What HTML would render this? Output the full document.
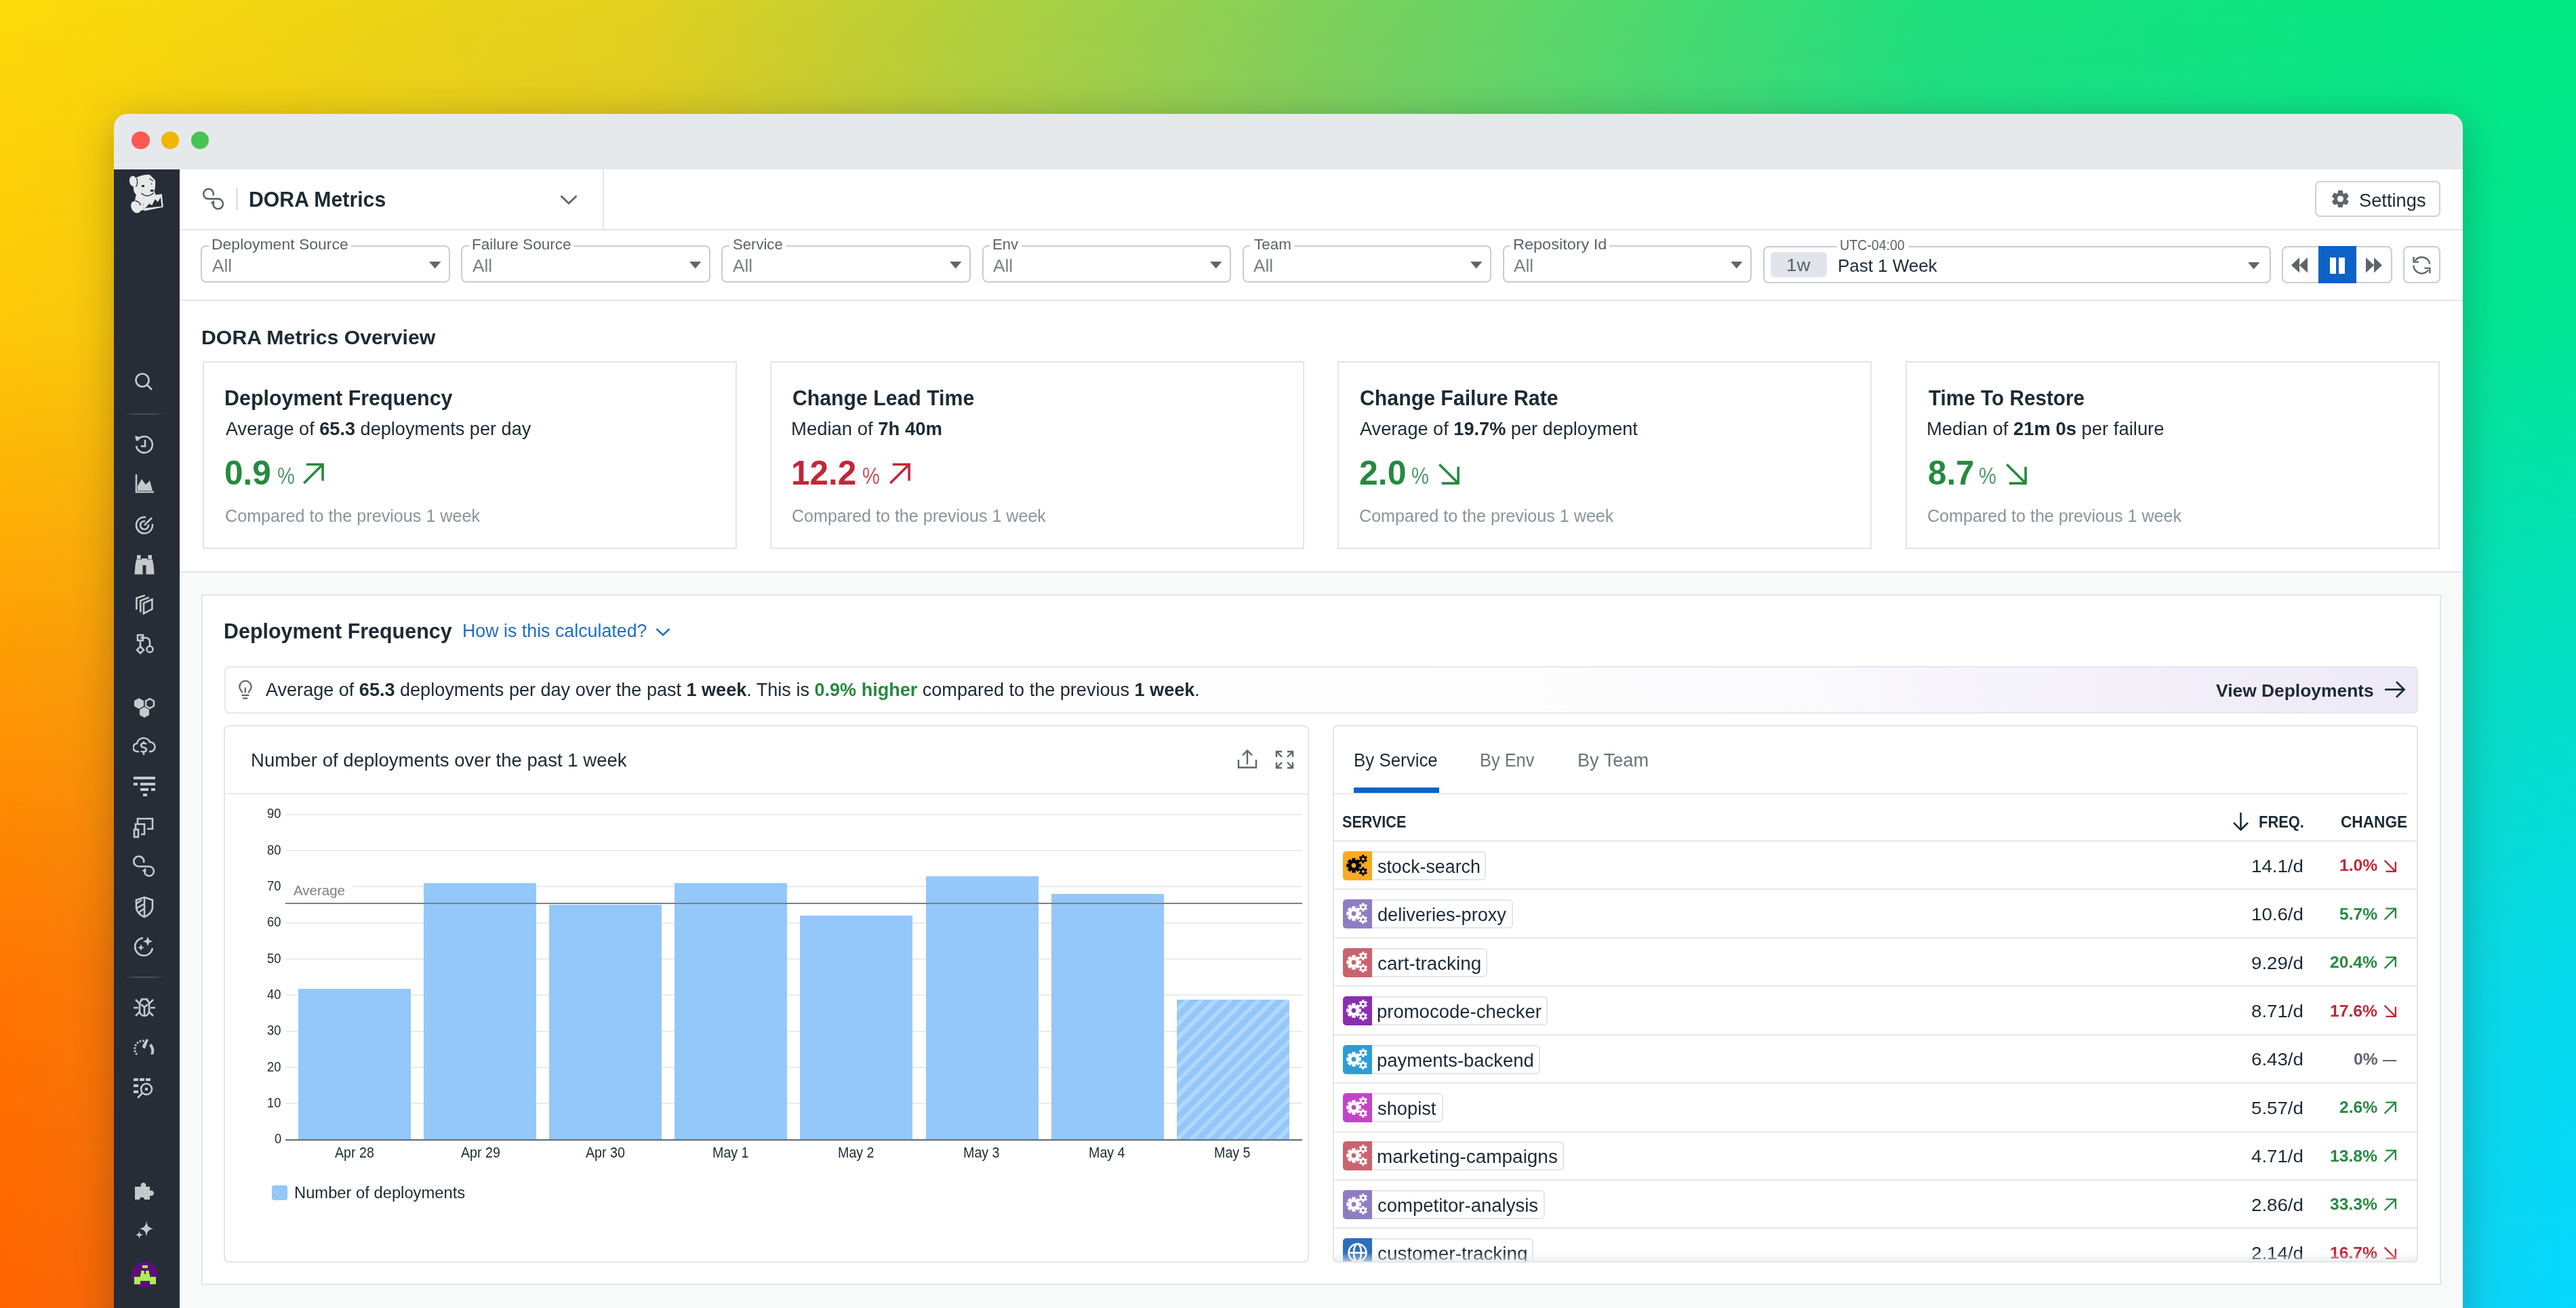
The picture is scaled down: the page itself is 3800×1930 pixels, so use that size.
<!DOCTYPE html>
<html><head><meta charset="utf-8"><title>DORA Metrics</title>
<style>
html,body{margin:0;padding:0}
body{width:3800px;height:1930px;position:relative;overflow:hidden;font-family:"Liberation Sans",sans-serif;
background:linear-gradient(90deg,#fddb0a 0%,#e1d020 25%,#85d05a 50%,#1fe07f 75%,#00ea84 100%)}
.bg2{position:absolute;left:0;top:0;width:3800px;height:1930px;
background:linear-gradient(90deg,#ff6300 0%,#c08a40 30%,#60b0a0 60%,#05d8ff 100%);
-webkit-mask-image:linear-gradient(180deg,rgba(0,0,0,0) 0%,rgba(0,0,0,.155) 25%,rgba(0,0,0,.52) 50%,rgba(0,0,0,.855) 75%,#000 100%);mask-image:linear-gradient(180deg,rgba(0,0,0,0) 0%,rgba(0,0,0,.155) 25%,rgba(0,0,0,.52) 50%,rgba(0,0,0,.855) 75%,#000 100%)}
.win{position:absolute;left:168px;top:168px;width:3465px;height:1900px;border-radius:20px 20px 0 0;box-shadow:0 10px 60px rgba(0,0,0,0.24)}
.t{position:absolute;line-height:1;white-space:pre;transform-origin:0 0}
b{font-weight:700}
</style></head><body>
<div class="bg2"></div>
<div class="win"></div>
<div style="position:absolute;left:168.0px;top:168.0px;width:3465.0px;height:82.0px;background:#e5e9ec;border-radius:20px 20px 0 0"></div>
<div style="position:absolute;left:193.9px;top:193.6px;width:26.8px;height:26.8px;background:#ff5a52;border-radius:50%"></div>
<div style="position:absolute;left:237.7px;top:193.6px;width:26.8px;height:26.8px;background:#f2b600;border-radius:50%"></div>
<div style="position:absolute;left:281.7px;top:193.6px;width:26.8px;height:26.8px;background:#47c452;border-radius:50%"></div>
<div style="position:absolute;left:168.0px;top:250.0px;width:97.0px;height:1680.0px;background:#262d37"></div>
<div style="position:absolute;left:265.0px;top:250.0px;width:3368.0px;height:1680.0px;background:#f8f9f9"></div>
<div style="position:absolute;left:265.0px;top:250.0px;width:3368.0px;height:193.0px;background:#fff"></div>
<div style="position:absolute;left:265.0px;top:337.5px;width:3368.0px;height:2.0px;background:#e4e7ea"></div>
<div style="position:absolute;left:889.0px;top:250.0px;width:2.0px;height:88.0px;background:#e4e7ea"></div>
<div style="position:absolute;left:265.0px;top:441.5px;width:3368.0px;height:2.0px;background:#e4e7ea"></div>
<div style="position:absolute;left:265.0px;top:443.5px;width:3368.0px;height:399.5px;background:#fff"></div>
<div style="position:absolute;left:265.0px;top:842.5px;width:3368.0px;height:2.0px;background:#e2e6e8"></div>
<svg style="position:absolute;left:296.0px;top:276.0px;" width="36" height="36" viewBox="0 0 36 36"><g fill="none" stroke="#5f6569" stroke-width="2.6" stroke-linecap="butt"><path d="M18.5 12.5 A7.3 7.3 0 1 0 10.6 17.4 L25.2 17.4 A7.4 7.4 0 1 1 18.3 24.2"/></g><path d="M14.2 23.5 L19.8 19.5 L20.6 25.8 Z" fill="#5f6569"/></svg>
<div style="position:absolute;left:348.3px;top:277.0px;width:3.2px;height:33.4px;background:#e0e3e8"></div>
<svg style="position:absolute;left:825.0px;top:286.0px;" width="28" height="18" viewBox="0 0 28 18"><path d="M2.5 3 L14 14 L25.5 3" fill="none" stroke="#5f6569" stroke-width="2.8"/></svg>
<div style="position:absolute;left:3415.0px;top:266.6px;width:185.0px;height:53.8px;border:2px solid #cdd1d6;border-radius:7px;box-sizing:border-box;background:#fff"></div>
<svg style="position:absolute;left:3439.0px;top:279.5px;" width="27" height="27" viewBox="0 0 27 27"><g transform="translate(13.4,13.5)" fill="#5f6569"><path d="M-3.2 -12.6 L3.2 -12.6 L4.2 -7 L-4.2 -7 Z" transform="rotate(0)"/><path d="M-3.2 -12.6 L3.2 -12.6 L4.2 -7 L-4.2 -7 Z" transform="rotate(60)"/><path d="M-3.2 -12.6 L3.2 -12.6 L4.2 -7 L-4.2 -7 Z" transform="rotate(120)"/><path d="M-3.2 -12.6 L3.2 -12.6 L4.2 -7 L-4.2 -7 Z" transform="rotate(180)"/><path d="M-3.2 -12.6 L3.2 -12.6 L4.2 -7 L-4.2 -7 Z" transform="rotate(240)"/><path d="M-3.2 -12.6 L3.2 -12.6 L4.2 -7 L-4.2 -7 Z" transform="rotate(300)"/><circle r="9.3"/><circle r="4.6" fill="#fff"/></g></svg>
<div style="position:absolute;left:296.3px;top:362.3px;width:367.5px;height:54.3px;border:2px solid #c9ccd3;border-radius:8px;box-sizing:border-box"></div>
<div style="position:absolute;left:680.4px;top:362.3px;width:367.5px;height:54.3px;border:2px solid #c9ccd3;border-radius:8px;box-sizing:border-box"></div>
<div style="position:absolute;left:1064.4px;top:362.3px;width:367.5px;height:54.3px;border:2px solid #c9ccd3;border-radius:8px;box-sizing:border-box"></div>
<div style="position:absolute;left:1448.5px;top:362.3px;width:367.5px;height:54.3px;border:2px solid #c9ccd3;border-radius:8px;box-sizing:border-box"></div>
<div style="position:absolute;left:1832.5px;top:362.3px;width:367.5px;height:54.3px;border:2px solid #c9ccd3;border-radius:8px;box-sizing:border-box"></div>
<div style="position:absolute;left:2216.6px;top:362.3px;width:367.5px;height:54.3px;border:2px solid #c9ccd3;border-radius:8px;box-sizing:border-box"></div>
<div style="position:absolute;left:307.8px;top:360.0px;width:210.0px;height:6.0px;background:#fff"></div>
<svg style="position:absolute;left:632.7px;top:385.8px;" width="18" height="11" viewBox="0 0 18 11"><path d="M0 0 L17.4 0 L8.7 10.2 Z" fill="#5f6569"/></svg>
<div style="position:absolute;left:691.9px;top:360.0px;width:154.0px;height:6.0px;background:#fff"></div>
<svg style="position:absolute;left:1016.8px;top:385.8px;" width="18" height="11" viewBox="0 0 18 11"><path d="M0 0 L17.4 0 L8.7 10.2 Z" fill="#5f6569"/></svg>
<div style="position:absolute;left:1075.9px;top:360.0px;width:82.7px;height:6.0px;background:#fff"></div>
<svg style="position:absolute;left:1400.8px;top:385.8px;" width="18" height="11" viewBox="0 0 18 11"><path d="M0 0 L17.4 0 L8.7 10.2 Z" fill="#5f6569"/></svg>
<div style="position:absolute;left:1460.0px;top:360.0px;width:46.7px;height:6.0px;background:#fff"></div>
<svg style="position:absolute;left:1784.8px;top:385.8px;" width="18" height="11" viewBox="0 0 18 11"><path d="M0 0 L17.4 0 L8.7 10.2 Z" fill="#5f6569"/></svg>
<div style="position:absolute;left:1844.0px;top:360.0px;width:65.0px;height:6.0px;background:#fff"></div>
<svg style="position:absolute;left:2168.9px;top:385.8px;" width="18" height="11" viewBox="0 0 18 11"><path d="M0 0 L17.4 0 L8.7 10.2 Z" fill="#5f6569"/></svg>
<div style="position:absolute;left:2228.1px;top:360.0px;width:146.0px;height:6.0px;background:#fff"></div>
<svg style="position:absolute;left:2553.0px;top:385.8px;" width="18" height="11" viewBox="0 0 18 11"><path d="M0 0 L17.4 0 L8.7 10.2 Z" fill="#5f6569"/></svg>
<div style="position:absolute;left:2601.0px;top:363.0px;width:749.0px;height:55.0px;border:2px solid #c9ccd3;border-radius:8px;box-sizing:border-box"></div>
<div style="position:absolute;left:2709.5px;top:360.0px;width:105.0px;height:6.0px;background:#fff"></div>
<div style="position:absolute;left:2611.5px;top:371.7px;width:83.2px;height:37.3px;background:#e1e5ea;border-radius:6px"></div>
<svg style="position:absolute;left:3315.8px;top:386.7px;" width="18" height="11" viewBox="0 0 18 11"><path d="M0 0 L17.4 0 L8.7 10.2 Z" fill="#5f6569"/></svg>
<div style="position:absolute;left:3366.0px;top:363.0px;width:162.5px;height:55.0px;border:2px solid #c9ccd3;border-radius:8px;box-sizing:border-box"></div>
<div style="position:absolute;left:3420.0px;top:363.0px;width:55.5px;height:55.0px;background:#0c62c7"></div>
<svg style="position:absolute;left:3380.0px;top:380.0px;" width="25" height="23" viewBox="0 0 25 23"><path d="M12 0 L0 11.3 L12 22.5 Z M24 0 L12 11.3 L24 22.5 Z" fill="#5f6569"/></svg>
<div style="position:absolute;left:3436.7px;top:380.0px;width:8.9px;height:24.0px;background:#fff"></div>
<div style="position:absolute;left:3449.7px;top:380.0px;width:9.0px;height:24.0px;background:#fff"></div>
<svg style="position:absolute;left:3490.0px;top:380.0px;" width="25" height="23" viewBox="0 0 25 23"><path d="M0 0 L12 11.3 L0 22.5 Z M12 0 L24 11.3 L12 22.5 Z" fill="#5f6569"/></svg>
<div style="position:absolute;left:3545.0px;top:363.0px;width:55.0px;height:55.0px;border:2px solid #c9ccd3;border-radius:8px;box-sizing:border-box"></div>
<svg style="position:absolute;left:3558.0px;top:377.0px;" width="29" height="29" viewBox="0 0 29 29"><g fill="none" stroke="#5f6569" stroke-width="2.4"><path d="M26.4 12.6 A12 12 0 0 0 4.6 7.8"/><path d="M2.4 14.4 A12 12 0 0 0 24.2 21.4"/><path d="M2.5 2 L2.5 9.6 L10.2 9.6"/><path d="M18.4 18.6 L26.4 18.6 L26.4 26.2"/></g></svg>
<div style="position:absolute;left:299.0px;top:533.3px;width:788.0px;height:276.7px;border:2px solid #e3e5e8;box-sizing:border-box;background:#fff"></div>
<div style="position:absolute;left:1135.6px;top:533.3px;width:788.0px;height:276.7px;border:2px solid #e3e5e8;box-sizing:border-box;background:#fff"></div>
<div style="position:absolute;left:1972.7px;top:533.3px;width:788.0px;height:276.7px;border:2px solid #e3e5e8;box-sizing:border-box;background:#fff"></div>
<div style="position:absolute;left:2810.7px;top:533.3px;width:788.0px;height:276.7px;border:2px solid #e3e5e8;box-sizing:border-box;background:#fff"></div>
<svg style="position:absolute;left:446.0px;top:682.8px;" width="32.4" height="32.4" viewBox="0 0 32.4 32.4"><path d="M2.3 30.099999999999998 L30.099999999999998 2.3 M5.8 2.3 L30.099999999999998 2.3 L30.099999999999998 26.6" fill="none" stroke="#268a3e" stroke-width="3.6"/></svg>
<svg style="position:absolute;left:1310.7px;top:682.8px;" width="32.4" height="32.4" viewBox="0 0 32.4 32.4"><path d="M2.3 30.099999999999998 L30.099999999999998 2.3 M5.8 2.3 L30.099999999999998 2.3 L30.099999999999998 26.6" fill="none" stroke="#c02838" stroke-width="3.6"/></svg>
<svg style="position:absolute;left:2120.5px;top:682.8px;" width="32.4" height="32.4" viewBox="0 0 32.4 32.4"><path d="M2.3 2.3 L30.099999999999998 30.099999999999998 M5.8 30.099999999999998 L30.099999999999998 30.099999999999998 L30.099999999999998 5.8" fill="none" stroke="#268a3e" stroke-width="3.6"/></svg>
<svg style="position:absolute;left:2957.5px;top:682.8px;" width="32.4" height="32.4" viewBox="0 0 32.4 32.4"><path d="M2.3 2.3 L30.099999999999998 30.099999999999998 M5.8 30.099999999999998 L30.099999999999998 30.099999999999998 L30.099999999999998 5.8" fill="none" stroke="#268a3e" stroke-width="3.6"/></svg>
<div style="position:absolute;left:296.6px;top:876.7px;width:3304.7px;height:1019.8px;border:2px solid #e3e6e8;box-sizing:border-box;background:#fff"></div>
<svg style="position:absolute;left:965.5px;top:925.0px;" width="24" height="16" viewBox="0 0 24 16"><path d="M2.5 3 L12 12 L21.5 3" fill="none" stroke="#1f6fc6" stroke-width="2.6"/></svg>
<div style="position:absolute;left:330.6px;top:983.3px;width:3236.4px;height:69.4px;border:2px solid #e6e7eb;border-radius:7px;box-sizing:border-box;background:linear-gradient(90deg,#ffffff 0%,#fefefe 55%,#faf9fc 73%,#f3f0fa 87%,#ede9f7 100%)"></div>
<svg style="position:absolute;left:349.0px;top:1000.0px;" width="26" height="34" viewBox="0 0 26 34"><g fill="none" stroke="#5f6569" stroke-width="2.2"><path d="M8.2 22.5 C8.2 19.5 4.3 17.5 4.3 13.4 A8.7 8.7 0 0 1 21.7 13.4 C21.7 17.5 17.8 19.5 17.8 22.5"/><path d="M12.8 14.5 L12.8 22"/><path d="M7.6 25.8 L18.4 25.8 M9 30.3 L16.2 30.3"/></g></svg>
<svg style="position:absolute;left:3516.0px;top:1004.0px;" width="34" height="27" viewBox="0 0 34 27"><g fill="none" stroke="#1c2a33" stroke-width="2.8"><path d="M2 13.4 L30 13.4"/><path d="M19 2 L30.5 13.4 L19 24.8"/></g></svg>
<div style="position:absolute;left:330.3px;top:1070.3px;width:1600.7px;height:792.7px;border:2px solid #e3e5e8;border-radius:7px;box-sizing:border-box;background:#fff"></div>
<div style="position:absolute;left:332.0px;top:1169.5px;width:1597.0px;height:2.0px;background:#e8eaec"></div>
<svg style="position:absolute;left:1824.0px;top:1104.0px;" width="32" height="32" viewBox="0 0 32 32"><g fill="none" stroke="#5f6569" stroke-width="2.4"><path d="M3 17 L3 28.5 L29 28.5 L29 17"/><path d="M16 24 L16 4"/><path d="M9 10.5 L16 3.5 L23 10.5"/></g></svg>
<svg style="position:absolute;left:1880.0px;top:1106.0px;" width="30" height="30" viewBox="0 0 30 30"><g fill="none" stroke="#5f6569" stroke-width="2.4"><path d="M3 11 L3 3 L11 3 M3 3 L11 11"/><path d="M19 3 L27 3 L27 11 M27 3 L19 11"/><path d="M3 19 L3 27 L11 27 M3 27 L11 19"/><path d="M27 19 L27 27 L19 27 M27 27 L19 19"/></g></svg>
<div style="position:absolute;left:421.0px;top:1627.2px;width:1500.0px;height:2.0px;background:#e9ebed"></div>
<div style="position:absolute;left:421.0px;top:1573.8px;width:1500.0px;height:2.0px;background:#e9ebed"></div>
<div style="position:absolute;left:421.0px;top:1520.5px;width:1500.0px;height:2.0px;background:#e9ebed"></div>
<div style="position:absolute;left:421.0px;top:1467.2px;width:1500.0px;height:2.0px;background:#e9ebed"></div>
<div style="position:absolute;left:421.0px;top:1413.8px;width:1500.0px;height:2.0px;background:#e9ebed"></div>
<div style="position:absolute;left:421.0px;top:1360.5px;width:1500.0px;height:2.0px;background:#e9ebed"></div>
<div style="position:absolute;left:421.0px;top:1307.2px;width:1500.0px;height:2.0px;background:#e9ebed"></div>
<div style="position:absolute;left:421.0px;top:1253.8px;width:1500.0px;height:2.0px;background:#e9ebed"></div>
<div style="position:absolute;left:421.0px;top:1200.5px;width:1500.0px;height:2.0px;background:#e9ebed"></div>
<div style="position:absolute;left:440.0px;top:1458.6px;width:166.0px;height:222.9px;background:#94c8fa"></div>
<div style="position:absolute;left:625.1px;top:1302.8px;width:166.0px;height:378.7px;background:#94c8fa"></div>
<div style="position:absolute;left:810.2px;top:1334.8px;width:166.0px;height:346.7px;background:#94c8fa"></div>
<div style="position:absolute;left:995.3px;top:1302.8px;width:166.0px;height:378.7px;background:#94c8fa"></div>
<div style="position:absolute;left:1180.4px;top:1350.8px;width:166.0px;height:330.7px;background:#94c8fa"></div>
<div style="position:absolute;left:1365.5px;top:1292.7px;width:166.0px;height:388.8px;background:#94c8fa"></div>
<div style="position:absolute;left:1550.6px;top:1318.8px;width:166.0px;height:362.7px;background:#94c8fa"></div>
<div style="position:absolute;left:1735.7px;top:1474.6px;width:166.0px;height:206.9px;background:repeating-linear-gradient(-45deg,#94c8fa 0px,#94c8fa 9px,#b0d7fc 9px,#b0d7fc 15px)"></div>
<div style="position:absolute;left:421.0px;top:1332.2px;width:1500.0px;height:1.7px;background:#7a8187"></div>
<div style="position:absolute;left:421.0px;top:1300.0px;width:99.0px;height:30.0px;background:#fff"></div>
<div style="position:absolute;left:421.0px;top:1680.5px;width:1500.0px;height:2.5px;background:#5f6a74"></div>
<div style="position:absolute;left:401.0px;top:1749.0px;width:22.5px;height:21.7px;background:#94c8fa;border-radius:4px"></div>
<div style="position:absolute;left:1965.5px;top:1070.3px;width:1601.5px;height:792.7px;border:2px solid #e3e5e8;border-radius:7px;box-sizing:border-box;background:#fff;overflow:hidden"></div>
<div style="position:absolute;left:1967.0px;top:1169.5px;width:1583.0px;height:2.0px;background:#e8eaec"></div>
<div style="position:absolute;left:1996.5px;top:1162.0px;width:126.7px;height:8.0px;background:#0b63cc"></div>
<svg style="position:absolute;left:3292.0px;top:1198.0px;" width="27" height="28" viewBox="0 0 27 28"><g fill="none" stroke="#1c2a33" stroke-width="2.6"><path d="M13.5 1 L13.5 26"/><path d="M3 16 L13.5 26.5 L24 16"/></g></svg>
<div style="position:absolute;left:1967.0px;top:1239.5px;width:1598.0px;height:2.0px;background:#e4e6e9"></div>
<div style="position:absolute;left:1967.0px;top:1311.2px;width:1598.0px;height:2.0px;background:#e6e8ea"></div>
<div style="position:absolute;left:1967.0px;top:1382.7px;width:1598.0px;height:2.0px;background:#e6e8ea"></div>
<div style="position:absolute;left:1967.0px;top:1454.1px;width:1598.0px;height:2.0px;background:#e6e8ea"></div>
<div style="position:absolute;left:1967.0px;top:1525.6px;width:1598.0px;height:2.0px;background:#e6e8ea"></div>
<div style="position:absolute;left:1967.0px;top:1597.0px;width:1598.0px;height:2.0px;background:#e6e8ea"></div>
<div style="position:absolute;left:1967.0px;top:1668.5px;width:1598.0px;height:2.0px;background:#e6e8ea"></div>
<div style="position:absolute;left:1967.0px;top:1739.9px;width:1598.0px;height:2.0px;background:#e6e8ea"></div>
<div style="position:absolute;left:1967.0px;top:1811.4px;width:1598.0px;height:2.0px;background:#e6e8ea"></div>
<div style="position:absolute;left:1980.9px;top:1255.7px;width:211.5px;height:43.0px;border:2px solid #e3e5e8;border-radius:6px;box-sizing:border-box;background:#fff"></div>
<div style="position:absolute;left:1980.9px;top:1255.7px;width:42.9px;height:43.0px;background:#f8aa25;border-radius:5px 0 0 5px"></div>
<svg style="position:absolute;left:1980.9px;top:1255.7px;" width="43" height="43" viewBox="0 0 43 43"><g transform="translate(16 21)" fill="#000"><rect x="-2.70" y="-10.80" width="5.40" height="4.86" rx="0.6" transform="rotate(0.0)"/><rect x="-2.70" y="-10.80" width="5.40" height="4.86" rx="0.6" transform="rotate(45.0)"/><rect x="-2.70" y="-10.80" width="5.40" height="4.86" rx="0.6" transform="rotate(90.0)"/><rect x="-2.70" y="-10.80" width="5.40" height="4.86" rx="0.6" transform="rotate(135.0)"/><rect x="-2.70" y="-10.80" width="5.40" height="4.86" rx="0.6" transform="rotate(180.0)"/><rect x="-2.70" y="-10.80" width="5.40" height="4.86" rx="0.6" transform="rotate(225.0)"/><rect x="-2.70" y="-10.80" width="5.40" height="4.86" rx="0.6" transform="rotate(270.0)"/><rect x="-2.70" y="-10.80" width="5.40" height="4.86" rx="0.6" transform="rotate(315.0)"/><circle r="7.78"/><circle r="3.40" fill="#f8aa25"/></g><g transform="translate(29.8 11.5)" fill="#000"><rect x="-1.57" y="-6.30" width="3.15" height="2.83" rx="0.6" transform="rotate(0.0)"/><rect x="-1.57" y="-6.30" width="3.15" height="2.83" rx="0.6" transform="rotate(60.0)"/><rect x="-1.57" y="-6.30" width="3.15" height="2.83" rx="0.6" transform="rotate(120.0)"/><rect x="-1.57" y="-6.30" width="3.15" height="2.83" rx="0.6" transform="rotate(180.0)"/><rect x="-1.57" y="-6.30" width="3.15" height="2.83" rx="0.6" transform="rotate(240.0)"/><rect x="-1.57" y="-6.30" width="3.15" height="2.83" rx="0.6" transform="rotate(300.0)"/><circle r="4.54"/><circle r="2.10" fill="#f8aa25"/></g><g transform="translate(29.8 29.8)" fill="#000"><rect x="-1.57" y="-6.30" width="3.15" height="2.83" rx="0.6" transform="rotate(0.0)"/><rect x="-1.57" y="-6.30" width="3.15" height="2.83" rx="0.6" transform="rotate(60.0)"/><rect x="-1.57" y="-6.30" width="3.15" height="2.83" rx="0.6" transform="rotate(120.0)"/><rect x="-1.57" y="-6.30" width="3.15" height="2.83" rx="0.6" transform="rotate(180.0)"/><rect x="-1.57" y="-6.30" width="3.15" height="2.83" rx="0.6" transform="rotate(240.0)"/><rect x="-1.57" y="-6.30" width="3.15" height="2.83" rx="0.6" transform="rotate(300.0)"/><circle r="4.54"/><circle r="2.10" fill="#f8aa25"/></g></svg>
<div style="position:absolute;left:1980.9px;top:1327.2px;width:251.4px;height:43.0px;border:2px solid #e3e5e8;border-radius:6px;box-sizing:border-box;background:#fff"></div>
<div style="position:absolute;left:1980.9px;top:1327.2px;width:42.9px;height:43.0px;background:#8e7dc4;border-radius:5px 0 0 5px"></div>
<svg style="position:absolute;left:1980.9px;top:1327.2px;" width="43" height="43" viewBox="0 0 43 43"><g transform="translate(16 21)" fill="#fff"><rect x="-2.70" y="-10.80" width="5.40" height="4.86" rx="0.6" transform="rotate(0.0)"/><rect x="-2.70" y="-10.80" width="5.40" height="4.86" rx="0.6" transform="rotate(45.0)"/><rect x="-2.70" y="-10.80" width="5.40" height="4.86" rx="0.6" transform="rotate(90.0)"/><rect x="-2.70" y="-10.80" width="5.40" height="4.86" rx="0.6" transform="rotate(135.0)"/><rect x="-2.70" y="-10.80" width="5.40" height="4.86" rx="0.6" transform="rotate(180.0)"/><rect x="-2.70" y="-10.80" width="5.40" height="4.86" rx="0.6" transform="rotate(225.0)"/><rect x="-2.70" y="-10.80" width="5.40" height="4.86" rx="0.6" transform="rotate(270.0)"/><rect x="-2.70" y="-10.80" width="5.40" height="4.86" rx="0.6" transform="rotate(315.0)"/><circle r="7.78"/><circle r="3.40" fill="#8e7dc4"/></g><g transform="translate(29.8 11.5)" fill="#fff"><rect x="-1.57" y="-6.30" width="3.15" height="2.83" rx="0.6" transform="rotate(0.0)"/><rect x="-1.57" y="-6.30" width="3.15" height="2.83" rx="0.6" transform="rotate(60.0)"/><rect x="-1.57" y="-6.30" width="3.15" height="2.83" rx="0.6" transform="rotate(120.0)"/><rect x="-1.57" y="-6.30" width="3.15" height="2.83" rx="0.6" transform="rotate(180.0)"/><rect x="-1.57" y="-6.30" width="3.15" height="2.83" rx="0.6" transform="rotate(240.0)"/><rect x="-1.57" y="-6.30" width="3.15" height="2.83" rx="0.6" transform="rotate(300.0)"/><circle r="4.54"/><circle r="2.10" fill="#8e7dc4"/></g><g transform="translate(29.8 29.8)" fill="#fff"><rect x="-1.57" y="-6.30" width="3.15" height="2.83" rx="0.6" transform="rotate(0.0)"/><rect x="-1.57" y="-6.30" width="3.15" height="2.83" rx="0.6" transform="rotate(60.0)"/><rect x="-1.57" y="-6.30" width="3.15" height="2.83" rx="0.6" transform="rotate(120.0)"/><rect x="-1.57" y="-6.30" width="3.15" height="2.83" rx="0.6" transform="rotate(180.0)"/><rect x="-1.57" y="-6.30" width="3.15" height="2.83" rx="0.6" transform="rotate(240.0)"/><rect x="-1.57" y="-6.30" width="3.15" height="2.83" rx="0.6" transform="rotate(300.0)"/><circle r="4.54"/><circle r="2.10" fill="#8e7dc4"/></g></svg>
<div style="position:absolute;left:1980.9px;top:1398.6px;width:213.3px;height:43.0px;border:2px solid #e3e5e8;border-radius:6px;box-sizing:border-box;background:#fff"></div>
<div style="position:absolute;left:1980.9px;top:1398.6px;width:42.9px;height:43.0px;background:#c9646f;border-radius:5px 0 0 5px"></div>
<svg style="position:absolute;left:1980.9px;top:1398.6px;" width="43" height="43" viewBox="0 0 43 43"><g transform="translate(16 21)" fill="#fff"><rect x="-2.70" y="-10.80" width="5.40" height="4.86" rx="0.6" transform="rotate(0.0)"/><rect x="-2.70" y="-10.80" width="5.40" height="4.86" rx="0.6" transform="rotate(45.0)"/><rect x="-2.70" y="-10.80" width="5.40" height="4.86" rx="0.6" transform="rotate(90.0)"/><rect x="-2.70" y="-10.80" width="5.40" height="4.86" rx="0.6" transform="rotate(135.0)"/><rect x="-2.70" y="-10.80" width="5.40" height="4.86" rx="0.6" transform="rotate(180.0)"/><rect x="-2.70" y="-10.80" width="5.40" height="4.86" rx="0.6" transform="rotate(225.0)"/><rect x="-2.70" y="-10.80" width="5.40" height="4.86" rx="0.6" transform="rotate(270.0)"/><rect x="-2.70" y="-10.80" width="5.40" height="4.86" rx="0.6" transform="rotate(315.0)"/><circle r="7.78"/><circle r="3.40" fill="#c9646f"/></g><g transform="translate(29.8 11.5)" fill="#fff"><rect x="-1.57" y="-6.30" width="3.15" height="2.83" rx="0.6" transform="rotate(0.0)"/><rect x="-1.57" y="-6.30" width="3.15" height="2.83" rx="0.6" transform="rotate(60.0)"/><rect x="-1.57" y="-6.30" width="3.15" height="2.83" rx="0.6" transform="rotate(120.0)"/><rect x="-1.57" y="-6.30" width="3.15" height="2.83" rx="0.6" transform="rotate(180.0)"/><rect x="-1.57" y="-6.30" width="3.15" height="2.83" rx="0.6" transform="rotate(240.0)"/><rect x="-1.57" y="-6.30" width="3.15" height="2.83" rx="0.6" transform="rotate(300.0)"/><circle r="4.54"/><circle r="2.10" fill="#c9646f"/></g><g transform="translate(29.8 29.8)" fill="#fff"><rect x="-1.57" y="-6.30" width="3.15" height="2.83" rx="0.6" transform="rotate(0.0)"/><rect x="-1.57" y="-6.30" width="3.15" height="2.83" rx="0.6" transform="rotate(60.0)"/><rect x="-1.57" y="-6.30" width="3.15" height="2.83" rx="0.6" transform="rotate(120.0)"/><rect x="-1.57" y="-6.30" width="3.15" height="2.83" rx="0.6" transform="rotate(180.0)"/><rect x="-1.57" y="-6.30" width="3.15" height="2.83" rx="0.6" transform="rotate(240.0)"/><rect x="-1.57" y="-6.30" width="3.15" height="2.83" rx="0.6" transform="rotate(300.0)"/><circle r="4.54"/><circle r="2.10" fill="#c9646f"/></g></svg>
<div style="position:absolute;left:1980.9px;top:1470.1px;width:302.6px;height:43.0px;border:2px solid #e3e5e8;border-radius:6px;box-sizing:border-box;background:#fff"></div>
<div style="position:absolute;left:1980.9px;top:1470.1px;width:42.9px;height:43.0px;background:#8b2fb0;border-radius:5px 0 0 5px"></div>
<svg style="position:absolute;left:1980.9px;top:1470.1px;" width="43" height="43" viewBox="0 0 43 43"><g transform="translate(16 21)" fill="#fff"><rect x="-2.70" y="-10.80" width="5.40" height="4.86" rx="0.6" transform="rotate(0.0)"/><rect x="-2.70" y="-10.80" width="5.40" height="4.86" rx="0.6" transform="rotate(45.0)"/><rect x="-2.70" y="-10.80" width="5.40" height="4.86" rx="0.6" transform="rotate(90.0)"/><rect x="-2.70" y="-10.80" width="5.40" height="4.86" rx="0.6" transform="rotate(135.0)"/><rect x="-2.70" y="-10.80" width="5.40" height="4.86" rx="0.6" transform="rotate(180.0)"/><rect x="-2.70" y="-10.80" width="5.40" height="4.86" rx="0.6" transform="rotate(225.0)"/><rect x="-2.70" y="-10.80" width="5.40" height="4.86" rx="0.6" transform="rotate(270.0)"/><rect x="-2.70" y="-10.80" width="5.40" height="4.86" rx="0.6" transform="rotate(315.0)"/><circle r="7.78"/><circle r="3.40" fill="#8b2fb0"/></g><g transform="translate(29.8 11.5)" fill="#fff"><rect x="-1.57" y="-6.30" width="3.15" height="2.83" rx="0.6" transform="rotate(0.0)"/><rect x="-1.57" y="-6.30" width="3.15" height="2.83" rx="0.6" transform="rotate(60.0)"/><rect x="-1.57" y="-6.30" width="3.15" height="2.83" rx="0.6" transform="rotate(120.0)"/><rect x="-1.57" y="-6.30" width="3.15" height="2.83" rx="0.6" transform="rotate(180.0)"/><rect x="-1.57" y="-6.30" width="3.15" height="2.83" rx="0.6" transform="rotate(240.0)"/><rect x="-1.57" y="-6.30" width="3.15" height="2.83" rx="0.6" transform="rotate(300.0)"/><circle r="4.54"/><circle r="2.10" fill="#8b2fb0"/></g><g transform="translate(29.8 29.8)" fill="#fff"><rect x="-1.57" y="-6.30" width="3.15" height="2.83" rx="0.6" transform="rotate(0.0)"/><rect x="-1.57" y="-6.30" width="3.15" height="2.83" rx="0.6" transform="rotate(60.0)"/><rect x="-1.57" y="-6.30" width="3.15" height="2.83" rx="0.6" transform="rotate(120.0)"/><rect x="-1.57" y="-6.30" width="3.15" height="2.83" rx="0.6" transform="rotate(180.0)"/><rect x="-1.57" y="-6.30" width="3.15" height="2.83" rx="0.6" transform="rotate(240.0)"/><rect x="-1.57" y="-6.30" width="3.15" height="2.83" rx="0.6" transform="rotate(300.0)"/><circle r="4.54"/><circle r="2.10" fill="#8b2fb0"/></g></svg>
<div style="position:absolute;left:1980.9px;top:1541.5px;width:291.0px;height:43.0px;border:2px solid #e3e5e8;border-radius:6px;box-sizing:border-box;background:#fff"></div>
<div style="position:absolute;left:1980.9px;top:1541.5px;width:42.9px;height:43.0px;background:#2f9cd5;border-radius:5px 0 0 5px"></div>
<svg style="position:absolute;left:1980.9px;top:1541.5px;" width="43" height="43" viewBox="0 0 43 43"><g transform="translate(16 21)" fill="#fff"><rect x="-2.70" y="-10.80" width="5.40" height="4.86" rx="0.6" transform="rotate(0.0)"/><rect x="-2.70" y="-10.80" width="5.40" height="4.86" rx="0.6" transform="rotate(45.0)"/><rect x="-2.70" y="-10.80" width="5.40" height="4.86" rx="0.6" transform="rotate(90.0)"/><rect x="-2.70" y="-10.80" width="5.40" height="4.86" rx="0.6" transform="rotate(135.0)"/><rect x="-2.70" y="-10.80" width="5.40" height="4.86" rx="0.6" transform="rotate(180.0)"/><rect x="-2.70" y="-10.80" width="5.40" height="4.86" rx="0.6" transform="rotate(225.0)"/><rect x="-2.70" y="-10.80" width="5.40" height="4.86" rx="0.6" transform="rotate(270.0)"/><rect x="-2.70" y="-10.80" width="5.40" height="4.86" rx="0.6" transform="rotate(315.0)"/><circle r="7.78"/><circle r="3.40" fill="#2f9cd5"/></g><g transform="translate(29.8 11.5)" fill="#fff"><rect x="-1.57" y="-6.30" width="3.15" height="2.83" rx="0.6" transform="rotate(0.0)"/><rect x="-1.57" y="-6.30" width="3.15" height="2.83" rx="0.6" transform="rotate(60.0)"/><rect x="-1.57" y="-6.30" width="3.15" height="2.83" rx="0.6" transform="rotate(120.0)"/><rect x="-1.57" y="-6.30" width="3.15" height="2.83" rx="0.6" transform="rotate(180.0)"/><rect x="-1.57" y="-6.30" width="3.15" height="2.83" rx="0.6" transform="rotate(240.0)"/><rect x="-1.57" y="-6.30" width="3.15" height="2.83" rx="0.6" transform="rotate(300.0)"/><circle r="4.54"/><circle r="2.10" fill="#2f9cd5"/></g><g transform="translate(29.8 29.8)" fill="#fff"><rect x="-1.57" y="-6.30" width="3.15" height="2.83" rx="0.6" transform="rotate(0.0)"/><rect x="-1.57" y="-6.30" width="3.15" height="2.83" rx="0.6" transform="rotate(60.0)"/><rect x="-1.57" y="-6.30" width="3.15" height="2.83" rx="0.6" transform="rotate(120.0)"/><rect x="-1.57" y="-6.30" width="3.15" height="2.83" rx="0.6" transform="rotate(180.0)"/><rect x="-1.57" y="-6.30" width="3.15" height="2.83" rx="0.6" transform="rotate(240.0)"/><rect x="-1.57" y="-6.30" width="3.15" height="2.83" rx="0.6" transform="rotate(300.0)"/><circle r="4.54"/><circle r="2.10" fill="#2f9cd5"/></g></svg>
<div style="position:absolute;left:1980.9px;top:1613.0px;width:147.8px;height:43.0px;border:2px solid #e3e5e8;border-radius:6px;box-sizing:border-box;background:#fff"></div>
<div style="position:absolute;left:1980.9px;top:1613.0px;width:42.9px;height:43.0px;background:#c444c6;border-radius:5px 0 0 5px"></div>
<svg style="position:absolute;left:1980.9px;top:1613.0px;" width="43" height="43" viewBox="0 0 43 43"><g transform="translate(16 21)" fill="#fff"><rect x="-2.70" y="-10.80" width="5.40" height="4.86" rx="0.6" transform="rotate(0.0)"/><rect x="-2.70" y="-10.80" width="5.40" height="4.86" rx="0.6" transform="rotate(45.0)"/><rect x="-2.70" y="-10.80" width="5.40" height="4.86" rx="0.6" transform="rotate(90.0)"/><rect x="-2.70" y="-10.80" width="5.40" height="4.86" rx="0.6" transform="rotate(135.0)"/><rect x="-2.70" y="-10.80" width="5.40" height="4.86" rx="0.6" transform="rotate(180.0)"/><rect x="-2.70" y="-10.80" width="5.40" height="4.86" rx="0.6" transform="rotate(225.0)"/><rect x="-2.70" y="-10.80" width="5.40" height="4.86" rx="0.6" transform="rotate(270.0)"/><rect x="-2.70" y="-10.80" width="5.40" height="4.86" rx="0.6" transform="rotate(315.0)"/><circle r="7.78"/><circle r="3.40" fill="#c444c6"/></g><g transform="translate(29.8 11.5)" fill="#fff"><rect x="-1.57" y="-6.30" width="3.15" height="2.83" rx="0.6" transform="rotate(0.0)"/><rect x="-1.57" y="-6.30" width="3.15" height="2.83" rx="0.6" transform="rotate(60.0)"/><rect x="-1.57" y="-6.30" width="3.15" height="2.83" rx="0.6" transform="rotate(120.0)"/><rect x="-1.57" y="-6.30" width="3.15" height="2.83" rx="0.6" transform="rotate(180.0)"/><rect x="-1.57" y="-6.30" width="3.15" height="2.83" rx="0.6" transform="rotate(240.0)"/><rect x="-1.57" y="-6.30" width="3.15" height="2.83" rx="0.6" transform="rotate(300.0)"/><circle r="4.54"/><circle r="2.10" fill="#c444c6"/></g><g transform="translate(29.8 29.8)" fill="#fff"><rect x="-1.57" y="-6.30" width="3.15" height="2.83" rx="0.6" transform="rotate(0.0)"/><rect x="-1.57" y="-6.30" width="3.15" height="2.83" rx="0.6" transform="rotate(60.0)"/><rect x="-1.57" y="-6.30" width="3.15" height="2.83" rx="0.6" transform="rotate(120.0)"/><rect x="-1.57" y="-6.30" width="3.15" height="2.83" rx="0.6" transform="rotate(180.0)"/><rect x="-1.57" y="-6.30" width="3.15" height="2.83" rx="0.6" transform="rotate(240.0)"/><rect x="-1.57" y="-6.30" width="3.15" height="2.83" rx="0.6" transform="rotate(300.0)"/><circle r="4.54"/><circle r="2.10" fill="#c444c6"/></g></svg>
<div style="position:absolute;left:1980.9px;top:1684.4px;width:325.9px;height:43.0px;border:2px solid #e3e5e8;border-radius:6px;box-sizing:border-box;background:#fff"></div>
<div style="position:absolute;left:1980.9px;top:1684.4px;width:42.9px;height:43.0px;background:#c9646f;border-radius:5px 0 0 5px"></div>
<svg style="position:absolute;left:1980.9px;top:1684.4px;" width="43" height="43" viewBox="0 0 43 43"><g transform="translate(16 21)" fill="#fff"><rect x="-2.70" y="-10.80" width="5.40" height="4.86" rx="0.6" transform="rotate(0.0)"/><rect x="-2.70" y="-10.80" width="5.40" height="4.86" rx="0.6" transform="rotate(45.0)"/><rect x="-2.70" y="-10.80" width="5.40" height="4.86" rx="0.6" transform="rotate(90.0)"/><rect x="-2.70" y="-10.80" width="5.40" height="4.86" rx="0.6" transform="rotate(135.0)"/><rect x="-2.70" y="-10.80" width="5.40" height="4.86" rx="0.6" transform="rotate(180.0)"/><rect x="-2.70" y="-10.80" width="5.40" height="4.86" rx="0.6" transform="rotate(225.0)"/><rect x="-2.70" y="-10.80" width="5.40" height="4.86" rx="0.6" transform="rotate(270.0)"/><rect x="-2.70" y="-10.80" width="5.40" height="4.86" rx="0.6" transform="rotate(315.0)"/><circle r="7.78"/><circle r="3.40" fill="#c9646f"/></g><g transform="translate(29.8 11.5)" fill="#fff"><rect x="-1.57" y="-6.30" width="3.15" height="2.83" rx="0.6" transform="rotate(0.0)"/><rect x="-1.57" y="-6.30" width="3.15" height="2.83" rx="0.6" transform="rotate(60.0)"/><rect x="-1.57" y="-6.30" width="3.15" height="2.83" rx="0.6" transform="rotate(120.0)"/><rect x="-1.57" y="-6.30" width="3.15" height="2.83" rx="0.6" transform="rotate(180.0)"/><rect x="-1.57" y="-6.30" width="3.15" height="2.83" rx="0.6" transform="rotate(240.0)"/><rect x="-1.57" y="-6.30" width="3.15" height="2.83" rx="0.6" transform="rotate(300.0)"/><circle r="4.54"/><circle r="2.10" fill="#c9646f"/></g><g transform="translate(29.8 29.8)" fill="#fff"><rect x="-1.57" y="-6.30" width="3.15" height="2.83" rx="0.6" transform="rotate(0.0)"/><rect x="-1.57" y="-6.30" width="3.15" height="2.83" rx="0.6" transform="rotate(60.0)"/><rect x="-1.57" y="-6.30" width="3.15" height="2.83" rx="0.6" transform="rotate(120.0)"/><rect x="-1.57" y="-6.30" width="3.15" height="2.83" rx="0.6" transform="rotate(180.0)"/><rect x="-1.57" y="-6.30" width="3.15" height="2.83" rx="0.6" transform="rotate(240.0)"/><rect x="-1.57" y="-6.30" width="3.15" height="2.83" rx="0.6" transform="rotate(300.0)"/><circle r="4.54"/><circle r="2.10" fill="#c9646f"/></g></svg>
<div style="position:absolute;left:1980.9px;top:1755.9px;width:297.8px;height:43.0px;border:2px solid #e3e5e8;border-radius:6px;box-sizing:border-box;background:#fff"></div>
<div style="position:absolute;left:1980.9px;top:1755.9px;width:42.9px;height:43.0px;background:#8f7dc4;border-radius:5px 0 0 5px"></div>
<svg style="position:absolute;left:1980.9px;top:1755.9px;" width="43" height="43" viewBox="0 0 43 43"><g transform="translate(16 21)" fill="#fff"><rect x="-2.70" y="-10.80" width="5.40" height="4.86" rx="0.6" transform="rotate(0.0)"/><rect x="-2.70" y="-10.80" width="5.40" height="4.86" rx="0.6" transform="rotate(45.0)"/><rect x="-2.70" y="-10.80" width="5.40" height="4.86" rx="0.6" transform="rotate(90.0)"/><rect x="-2.70" y="-10.80" width="5.40" height="4.86" rx="0.6" transform="rotate(135.0)"/><rect x="-2.70" y="-10.80" width="5.40" height="4.86" rx="0.6" transform="rotate(180.0)"/><rect x="-2.70" y="-10.80" width="5.40" height="4.86" rx="0.6" transform="rotate(225.0)"/><rect x="-2.70" y="-10.80" width="5.40" height="4.86" rx="0.6" transform="rotate(270.0)"/><rect x="-2.70" y="-10.80" width="5.40" height="4.86" rx="0.6" transform="rotate(315.0)"/><circle r="7.78"/><circle r="3.40" fill="#8f7dc4"/></g><g transform="translate(29.8 11.5)" fill="#fff"><rect x="-1.57" y="-6.30" width="3.15" height="2.83" rx="0.6" transform="rotate(0.0)"/><rect x="-1.57" y="-6.30" width="3.15" height="2.83" rx="0.6" transform="rotate(60.0)"/><rect x="-1.57" y="-6.30" width="3.15" height="2.83" rx="0.6" transform="rotate(120.0)"/><rect x="-1.57" y="-6.30" width="3.15" height="2.83" rx="0.6" transform="rotate(180.0)"/><rect x="-1.57" y="-6.30" width="3.15" height="2.83" rx="0.6" transform="rotate(240.0)"/><rect x="-1.57" y="-6.30" width="3.15" height="2.83" rx="0.6" transform="rotate(300.0)"/><circle r="4.54"/><circle r="2.10" fill="#8f7dc4"/></g><g transform="translate(29.8 29.8)" fill="#fff"><rect x="-1.57" y="-6.30" width="3.15" height="2.83" rx="0.6" transform="rotate(0.0)"/><rect x="-1.57" y="-6.30" width="3.15" height="2.83" rx="0.6" transform="rotate(60.0)"/><rect x="-1.57" y="-6.30" width="3.15" height="2.83" rx="0.6" transform="rotate(120.0)"/><rect x="-1.57" y="-6.30" width="3.15" height="2.83" rx="0.6" transform="rotate(180.0)"/><rect x="-1.57" y="-6.30" width="3.15" height="2.83" rx="0.6" transform="rotate(240.0)"/><rect x="-1.57" y="-6.30" width="3.15" height="2.83" rx="0.6" transform="rotate(300.0)"/><circle r="4.54"/><circle r="2.10" fill="#8f7dc4"/></g></svg>
<div style="position:absolute;left:1980.9px;top:1827.3px;width:281.3px;height:43.0px;border:2px solid #e3e5e8;border-radius:6px;box-sizing:border-box;background:#fff"></div>
<div style="position:absolute;left:1980.9px;top:1827.3px;width:42.9px;height:43.0px;background:#2e6ebf;border-radius:5px 0 0 5px"></div>
<svg style="position:absolute;left:1980.9px;top:1827.3px;" width="43" height="43" viewBox="0 0 43 43"><g fill="none" stroke="#fff" stroke-width="2.6"><circle cx="21.5" cy="21.5" r="13"/><ellipse cx="21.5" cy="21.5" rx="5.5" ry="13"/><path d="M8.5 21.5 L34.5 21.5"/></g></svg>
<svg style="position:absolute;left:3516.0px;top:1267.6px;" width="19.5" height="19.5" viewBox="0 0 19.5 19.5"><path d="M1.65 1.65 L17.85 17.85 M3.5 17.85 L17.85 17.85 L17.85 3.5" fill="none" stroke="#c02838" stroke-width="2.3"/></svg>
<svg style="position:absolute;left:3516.0px;top:1339.0px;" width="19.5" height="19.5" viewBox="0 0 19.5 19.5"><path d="M1.65 17.85 L17.85 1.65 M3.5 1.65 L17.85 1.65 L17.85 16.0" fill="none" stroke="#268a3e" stroke-width="2.3"/></svg>
<svg style="position:absolute;left:3516.0px;top:1410.5px;" width="19.5" height="19.5" viewBox="0 0 19.5 19.5"><path d="M1.65 17.85 L17.85 1.65 M3.5 1.65 L17.85 1.65 L17.85 16.0" fill="none" stroke="#268a3e" stroke-width="2.3"/></svg>
<svg style="position:absolute;left:3516.0px;top:1481.9px;" width="19.5" height="19.5" viewBox="0 0 19.5 19.5"><path d="M1.65 1.65 L17.85 17.85 M3.5 17.85 L17.85 17.85 L17.85 3.5" fill="none" stroke="#c02838" stroke-width="2.3"/></svg>
<div style="position:absolute;left:3515.3px;top:1563.6px;width:19.7px;height:2.4px;background:#5c6670"></div>
<svg style="position:absolute;left:3516.0px;top:1624.8px;" width="19.5" height="19.5" viewBox="0 0 19.5 19.5"><path d="M1.65 17.85 L17.85 1.65 M3.5 1.65 L17.85 1.65 L17.85 16.0" fill="none" stroke="#268a3e" stroke-width="2.3"/></svg>
<svg style="position:absolute;left:3516.0px;top:1696.3px;" width="19.5" height="19.5" viewBox="0 0 19.5 19.5"><path d="M1.65 17.85 L17.85 1.65 M3.5 1.65 L17.85 1.65 L17.85 16.0" fill="none" stroke="#268a3e" stroke-width="2.3"/></svg>
<svg style="position:absolute;left:3516.0px;top:1767.8px;" width="19.5" height="19.5" viewBox="0 0 19.5 19.5"><path d="M1.65 17.85 L17.85 1.65 M3.5 1.65 L17.85 1.65 L17.85 16.0" fill="none" stroke="#268a3e" stroke-width="2.3"/></svg>
<svg style="position:absolute;left:3516.0px;top:1839.2px;" width="19.5" height="19.5" viewBox="0 0 19.5 19.5"><path d="M1.65 1.65 L17.85 17.85 M3.5 17.85 L17.85 17.85 L17.85 3.5" fill="none" stroke="#c02838" stroke-width="2.3"/></svg>
<svg style="position:absolute;left:185.0px;top:254.0px;" width="60" height="64" viewBox="0 0 60 64"><g fill="#e8e9ea"><path d="M16 8 C22 5 30 3 36 4 L44 12 C44.5 18 44 23 43 27.5 C42 31 39 34 34 35 C31 35.5 27 34 24 32 L25 36.5 L27 46 C24 45 22 46 21 47 L15 43 C14 38 15 35 16.5 34 C13 31 11.5 27 12 21 C13 15 14 10 16 8 Z"/><ellipse cx="11.6" cy="13.5" rx="5.6" ry="8" transform="rotate(-12 11.6 13.5)"/><ellipse cx="15.6" cy="51.5" rx="7" ry="9.3" transform="rotate(-28 15.6 51.5)"/><path d="M25 36.2 L53.8 32.3 L55.8 51.4 L27.9 57.3 Z"/><path d="M22 30 L43 29 L45 33.5 L25 37 Z"/><path d="M16 33 L25 35.5 L27.5 56 L21 57 L14 44 Z"/></g><g fill="none" stroke="#262d37" stroke-width="1.3"><path d="M16.5 9 C18 13 18 18 15.5 21.5"/><path d="M35.5 9.5 L41 13"/><path d="M23.5 31 C27 34.5 31 35.5 35 34.5 C38 33.5 40.5 32 42 30.5"/><path d="M15 42.5 C19 43 21.5 45.5 22.5 49"/></g><path d="M29.4 52.9 L35.2 46.5 L39.2 48.9 L43.6 40.1 L48 44.1 L51.9 37.2 L53.4 50.4 Z" fill="#262d37"/><ellipse cx="26" cy="20.5" rx="2.3" ry="1.8" fill="#262d37"/><ellipse cx="39.2" cy="27.2" rx="2.8" ry="1.8" fill="#262d37"/><ellipse cx="38.5" cy="17.2" rx="1" ry="1.5" fill="#262d37" opacity="0.6"/></svg>
<div style="position:absolute;left:184.0px;top:609.6px;width:58.0px;height:2.0px;background:linear-gradient(90deg,rgba(74,80,89,0),#4a5059 30%,#4a5059 70%,rgba(74,80,89,0))"></div>
<div style="position:absolute;left:184.0px;top:1441.3px;width:58.0px;height:2.0px;background:linear-gradient(90deg,rgba(74,80,89,0),#4a5059 30%,#4a5059 70%,rgba(74,80,89,0))"></div>
<svg style="position:absolute;left:196.0px;top:548.0px;" width="34" height="34" viewBox="0 0 34 34"><g fill="none" stroke="#c6c9cc" stroke-width="2.6"><circle cx="14" cy="13" r="9.5"/><path d="M21 20 L28 27"/></g></svg>
<svg style="position:absolute;left:196.0px;top:639.0px;" width="34" height="34" viewBox="0 0 34 34"><g fill="none" stroke="#c6c9cc" stroke-width="2.6"><path d="M6.5 11 A12 12 0 1 1 5 19"/><path d="M18 10 L18 19.4 L12 19.4"/></g><path d="M3 4 L11 6 L5 12 Z" fill="#c6c9cc"/></svg>
<svg style="position:absolute;left:196.0px;top:697.0px;" width="34" height="34" viewBox="0 0 34 34"><path d="M5 3 L5 29 L31 29" fill="none" stroke="#c6c9cc" stroke-width="2.6"/><path d="M7 27 L7 20 L13 10 L19 18 L25 12 L29 27 Z" fill="#c6c9cc"/></svg>
<svg style="position:absolute;left:196.0px;top:757.5px;" width="34" height="34" viewBox="0 0 34 34"><g fill="none" stroke="#c6c9cc" stroke-width="2.6"><path d="M28.8 14.9 A12 12 0 1 1 19.1 5.2"/><path d="M22.9 16 A6 6 0 1 1 18 11.1"/><path d="M17 17 L28 6"/></g></svg>
<svg style="position:absolute;left:196.0px;top:816.7px;" width="34" height="34" viewBox="0 0 34 34"><g fill="#c6c9cc"><rect x="6" y="2" width="5.5" height="6"/><rect x="22.5" y="2" width="5.5" height="6"/><path d="M5 8.5 L12.5 8.5 L14.5 12 L14.5 30.5 L2.5 30.5 L3.5 17 Z"/><path d="M29 8.5 L21.5 8.5 L19.5 12 L19.5 30.5 L31.5 30.5 L30.5 17 Z"/><rect x="13" y="7" width="8" height="10"/></g></svg>
<svg style="position:absolute;left:196.0px;top:875.0px;" width="34" height="34" viewBox="0 0 34 34"><g fill="none" stroke="#c6c9cc" stroke-width="2.6"><path d="M5.4 24.6 L5.4 7.4 L17.9 3.6"/><path d="M11.2 28.5 L11.2 11.3 L23.6 6.5"/><path d="M16 15 L28.4 9.3 L28.4 23.7 L16 30.4 Z"/></g></svg>
<svg style="position:absolute;left:196.0px;top:934.0px;" width="34" height="34" viewBox="0 0 34 34"><g fill="none" stroke="#c6c9cc" stroke-width="2.6"><rect x="7" y="3" width="8" height="8"/><path d="M11 11 L11 22"/><path d="M11 7 L19 7 A6 6 0 0 1 25 13 L25 20"/><circle cx="25" cy="24" r="4.5"/><path d="M11 20 L16 25 L11 30 L6 25 Z"/></g></svg>
<svg style="position:absolute;left:196.0px;top:1026.0px;" width="34" height="34" viewBox="0 0 34 34"><g fill="#c6c9cc"><path d="M9 4 L16 8 L16 16 L9 20 L2 16 L2 8 Z"/><path d="M17 17 L24 21 L24 29 L17 33 L10 29 L10 21 Z"/></g><path d="M25 5 L31 8.5 L31 15.5 L25 19 L19 15.5 L19 8.5 Z" fill="none" stroke="#c6c9cc" stroke-width="2.6"/></svg>
<svg style="position:absolute;left:196.0px;top:1084.0px;" width="34" height="34" viewBox="0 0 34 34"><g fill="none" stroke="#c6c9cc" stroke-width="2.6"><path d="M9 25 L7 25 A6 6 0 0 1 6 13 A10 10 0 0 1 25 11 A7 7 0 0 1 26 25 L24 25"/><path d="M20 14 C18 12 12 12 12 16 C12 20 20 18 20 22 C20 26 13 26 12 24"/><path d="M16 10 L16 13 M16 25 L16 30"/></g></svg>
<svg style="position:absolute;left:196.0px;top:1143.5px;" width="34" height="34" viewBox="0 0 34 34"><g fill="#c6c9cc"><rect x="1" y="2" width="32" height="4"/><rect x="1" y="11" width="6" height="4"/><rect x="11" y="11" width="22" height="4"/><rect x="11" y="19" width="12" height="4"/><rect x="27" y="19" width="6" height="4"/><rect x="15" y="27" width="6" height="4"/></g></svg>
<svg style="position:absolute;left:196.0px;top:1202.8px;" width="34" height="34" viewBox="0 0 34 34"><g fill="none" stroke="#c6c9cc" stroke-width="2.6"><path d="M7 14 L7 5 L29 5 L29 20 L21 20"/><path d="M4 22 L4 13 L17 13 L17 28 L12 28"/><rect x="2" y="21" width="6" height="11"/></g></svg>
<svg style="position:absolute;left:196.0px;top:1261.0px;" width="34" height="34" viewBox="0 0 34 34"><g fill="none" stroke="#c6c9cc" stroke-width="2.6"><path d="M16 12 A7.5 7.5 0 1 0 9 17.5 L24 17.5 A7 7 0 1 1 17 24"/></g><path d="M13.5 24 L19 19.5 L19.5 26 Z" fill="#c6c9cc"/></svg>
<svg style="position:absolute;left:196.0px;top:1321.4px;" width="34" height="34" viewBox="0 0 34 34"><g fill="none" stroke="#c6c9cc" stroke-width="2.6"><path d="M17 3 L29 7 L29 17 C29 25 22 30 17 32 C12 30 5 25 5 17 L5 7 Z"/><path d="M17 3 L17 32"/><path d="M6 12 L13 7 M6 19 L16 13 M8 26 L16 20"/></g></svg>
<svg style="position:absolute;left:196.0px;top:1379.7px;" width="34" height="34" viewBox="0 0 34 34"><g fill="none" stroke="#c6c9cc" stroke-width="2.6"><path d="M15 4 A13 13 0 1 0 29 19"/></g><g fill="#c6c9cc"><path d="M22 2 L24 7 L29 9 L24 11 L22 16 L20 11 L15 9 L20 7 Z"/><path d="M12 13 L13.5 17 L17 18 L13.5 19.5 L12 23 L10.5 19.5 L7 18 L10.5 17 Z"/></g></svg>
<svg style="position:absolute;left:196.0px;top:1469.6px;" width="34" height="34" viewBox="0 0 34 34"><g fill="none" stroke="#c6c9cc" stroke-width="2.6"><path d="M10 12 A7 8 0 0 1 24 12 L24 22 A7 7 0 0 1 10 22 Z"/><path d="M17 16 L17 29 M12 12 L17 16 L22 12"/><path d="M1 17 L8 17 M26 17 L33 17 M4 5 L10 11 M30 5 L24 11 M4 29 L10 23 M30 29 L24 23 M13 3 L13 7 M21 3 L21 7"/></g></svg>
<svg style="position:absolute;left:196.0px;top:1530.0px;" width="34" height="34" viewBox="0 0 34 34"><g fill="#c6c9cc"><path d="M20 3 L23 4 L18 17 A3.5 3.5 0 0 1 14 13 Z"/><path d="M27 10 A14 14 0 0 1 30 26 L26 26 A11 11 0 0 0 24 13 Z"/></g><path d="M6 26 A12 12 0 0 1 17 6" fill="none" stroke="#c6c9cc" stroke-width="3" stroke-dasharray="2.5 2"/></svg>
<svg style="position:absolute;left:196.0px;top:1589.0px;" width="34" height="34" viewBox="0 0 34 34"><g fill="#c6c9cc"><rect x="1" y="2" width="7" height="4"/><rect x="10" y="2" width="7" height="4"/><rect x="19" y="2" width="7" height="4"/><rect x="1" y="11" width="7" height="4"/><rect x="1" y="20" width="7" height="4"/></g><g fill="none" stroke="#c6c9cc" stroke-width="2.6"><circle cx="20" cy="18" r="8"/><path d="M14 24 L7 31"/></g><rect x="18" y="16" width="4" height="4" fill="#c6c9cc"/></svg>
<svg style="position:absolute;left:196.0px;top:1741.0px;" width="34" height="34" viewBox="0 0 34 34"><path d="M3 10 L12 10 A4 4 0 1 1 19 10 L25 10 L25 16 A4 4 0 1 1 25 23 L25 29 L17 29 A3 3 0 0 0 10 29 L3 29 Z" fill="#c6c9cc"/></svg>
<svg style="position:absolute;left:196.0px;top:1799.0px;" width="34" height="34" viewBox="0 0 34 34"><g fill="#c6c9cc"><path d="M20 2 C21 10 22.5 12 30 14 C22.5 16 21 18 20 26 C19 18 17.5 16 10 14 C17.5 12 19 10 20 2 Z"/><path d="M9.5 17 C10 21 11 22 15 23 C11 24 10 25 9.5 29 C9 25 8 24 4 23 C8 22 9 21 9.5 17 Z"/></g></svg>
<svg style="position:absolute;left:193.5px;top:1861.5px;" width="39" height="39" viewBox="0 0 39 39"><circle cx="19.5" cy="19.5" r="19.5" fill="#5c0f7a"/><g fill="#a8f04e"><rect x="16" y="5" width="8" height="4"/><rect x="14" y="13" width="5" height="5"/><rect x="21" y="13" width="5" height="5"/><path d="M4 22 L13 22 L13 18 L27 18 L27 22 L36 22 L36 33 L27 33 L27 28 L13 28 L13 33 L4 33 Z"/></g></svg>
<div class="t" style="left:366.77px;top:278.88px;font-size:31.32px;font-weight:700;color:#1c2a33;transform:scaleX(0.9660)">DORA Metrics</div>
<div class="t" style="left:3480.02px;top:281.54px;font-size:27.83px;font-weight:400;color:#1c2a33;transform:scaleX(0.9798)">Settings</div>
<div class="t" style="left:311.67px;top:349.93px;font-size:21.58px;font-weight:400;color:#5b6266;transform:scaleX(1.0642)">Deployment Source</div>
<div class="t" style="left:313.00px;top:379.14px;font-size:26.53px;font-weight:400;color:#7b8185;transform:scaleX(0.9893)">All</div>
<div class="t" style="left:695.76px;top:349.93px;font-size:21.58px;font-weight:400;color:#5b6266;transform:scaleX(1.0438)">Failure Source</div>
<div class="t" style="left:697.05px;top:379.14px;font-size:26.53px;font-weight:400;color:#7b8185;transform:scaleX(0.9893)">All</div>
<div class="t" style="left:1080.88px;top:349.93px;font-size:21.58px;font-weight:400;color:#5b6266;transform:scaleX(1.0243)">Service</div>
<div class="t" style="left:1081.10px;top:379.14px;font-size:26.53px;font-weight:400;color:#7b8185;transform:scaleX(0.9893)">All</div>
<div class="t" style="left:1463.91px;top:349.93px;font-size:21.58px;font-weight:400;color:#5b6266;transform:scaleX(1.0200)">Env</div>
<div class="t" style="left:1465.15px;top:379.14px;font-size:26.53px;font-weight:400;color:#7b8185;transform:scaleX(0.9893)">All</div>
<div class="t" style="left:1850.00px;top:349.93px;font-size:21.58px;font-weight:400;color:#5b6266;transform:scaleX(1.0385)">Team</div>
<div class="t" style="left:1849.20px;top:379.14px;font-size:26.53px;font-weight:400;color:#7b8185;transform:scaleX(0.9893)">All</div>
<div class="t" style="left:2231.87px;top:349.93px;font-size:21.58px;font-weight:400;color:#5b6266;transform:scaleX(1.0887)">Repository Id</div>
<div class="t" style="left:2233.25px;top:379.14px;font-size:26.53px;font-weight:400;color:#7b8185;transform:scaleX(0.9893)">All</div>
<div class="t" style="left:2713.65px;top:351.03px;font-size:21.22px;font-weight:400;color:#5b6266;transform:scaleX(0.9228)">UTC-04:00</div>
<div class="t" style="left:2634.84px;top:379.48px;font-size:25.65px;font-weight:400;color:#5b6266;transform:scaleX(1.0806)">1w</div>
<div class="t" style="left:2710.99px;top:380.06px;font-size:25.8px;font-weight:400;color:#1c2a33;transform:scaleX(1.0056)">Past 1 Week</div>
<div class="t" style="left:297.49px;top:482.86px;font-size:30.16px;font-weight:700;color:#1c2a33;transform:scaleX(1.0032)">DORA Metrics Overview</div>
<div class="t" style="left:331.27px;top:571.75px;font-size:31.47px;font-weight:700;color:#1c2a33;transform:scaleX(0.9671)">Deployment Frequency</div>
<div class="t" style="left:332.70px;top:620.29px;font-size:26.82px;font-weight:400;color:#1c2a33;transform:scaleX(1.0115)">Average of <b>65.3</b> deployments per day</div>
<div class="t" style="left:331.21px;top:674.25px;font-size:49.78px;font-weight:700;color:#268a3e;transform:scaleX(0.9938)">0.9</div>
<div class="t" style="left:408.66px;top:685.47px;font-size:34.52px;font-weight:400;color:#4f9a68;transform:scaleX(0.8448)">%</div>
<div class="t" style="left:331.71px;top:749.13px;font-size:25.36px;font-weight:400;color:#8a9499;transform:scaleX(0.9918)">Compared to the previous 1 week</div>
<div class="t" style="left:1168.84px;top:571.75px;font-size:31.47px;font-weight:700;color:#1c2a33;transform:scaleX(0.9606)">Change Lead Time</div>
<div class="t" style="left:1167.25px;top:620.29px;font-size:26.82px;font-weight:400;color:#1c2a33;transform:scaleX(1.0248)">Median of <b>7h 40m</b></div>
<div class="t" style="left:1166.82px;top:674.25px;font-size:49.78px;font-weight:700;color:#c02838;transform:scaleX(0.9946)">12.2</div>
<div class="t" style="left:1272.16px;top:685.47px;font-size:34.52px;font-weight:400;color:#c9525f;transform:scaleX(0.8448)">%</div>
<div class="t" style="left:1168.31px;top:749.13px;font-size:25.36px;font-weight:400;color:#8a9499;transform:scaleX(0.9886)">Compared to the previous 1 week</div>
<div class="t" style="left:2005.94px;top:571.75px;font-size:31.47px;font-weight:700;color:#1c2a33;transform:scaleX(0.9616)">Change Failure Rate</div>
<div class="t" style="left:2006.40px;top:620.29px;font-size:26.82px;font-weight:400;color:#1c2a33;transform:scaleX(1.0121)">Average of <b>19.7%</b> per deployment</div>
<div class="t" style="left:2004.89px;top:674.25px;font-size:49.78px;font-weight:700;color:#268a3e;transform:scaleX(1.0046)">2.0</div>
<div class="t" style="left:2081.96px;top:685.47px;font-size:34.52px;font-weight:400;color:#4f9a68;transform:scaleX(0.8448)">%</div>
<div class="t" style="left:2005.41px;top:749.13px;font-size:25.36px;font-weight:400;color:#8a9499;transform:scaleX(0.9899)">Compared to the previous 1 week</div>
<div class="t" style="left:2844.90px;top:571.75px;font-size:31.47px;font-weight:700;color:#1c2a33;transform:scaleX(0.9444)">Time To Restore</div>
<div class="t" style="left:2842.36px;top:620.29px;font-size:26.82px;font-weight:400;color:#1c2a33;transform:scaleX(1.0224)">Median of <b>21m 0s</b> per failure</div>
<div class="t" style="left:2843.91px;top:674.25px;font-size:49.78px;font-weight:700;color:#268a3e;transform:scaleX(0.9894)">8.7</div>
<div class="t" style="left:2918.96px;top:685.47px;font-size:34.52px;font-weight:400;color:#4f9a68;transform:scaleX(0.8448)">%</div>
<div class="t" style="left:2843.41px;top:749.13px;font-size:25.36px;font-weight:400;color:#8a9499;transform:scaleX(0.9889)">Compared to the previous 1 week</div>
<div class="t" style="left:329.66px;top:915.88px;font-size:31.32px;font-weight:700;color:#1c2a33;transform:scaleX(0.9721)">Deployment Frequency</div>
<div class="t" style="left:681.53px;top:917.29px;font-size:27.18px;font-weight:400;color:#1f6fc6;transform:scaleX(0.9858)">How is this calculated?</div>
<div class="t" style="left:391.70px;top:1005.31px;font-size:27.03px;font-weight:400;color:#1c2a33;transform:scaleX(1.0012)">Average of <b>65.3</b> deployments per day over the past <b>1 week</b>. This is <b style="color:#268a3e">0.9% higher</b> compared to the previous <b>1 week</b>.</div>
<div class="t" style="left:3269.00px;top:1007.24px;font-size:25.94px;font-weight:700;color:#1c2a33;transform:scaleX(1.0175)">View Deployments</div>
<div class="t" style="left:370.45px;top:1109.07px;font-size:26.96px;font-weight:400;color:#1c2a33;transform:scaleX(1.0226)">Number of deployments over the past 1 week</div>
<div class="t" style="left:404.70px;top:1671.26px;font-size:19.77px;font-weight:400;color:#1c2a33;transform:scaleX(0.9300)">0</div>
<div class="t" style="left:394.47px;top:1617.93px;font-size:19.77px;font-weight:400;color:#1c2a33;transform:scaleX(0.9300)">10</div>
<div class="t" style="left:394.47px;top:1564.59px;font-size:19.77px;font-weight:400;color:#1c2a33;transform:scaleX(0.9300)">20</div>
<div class="t" style="left:394.47px;top:1511.26px;font-size:19.77px;font-weight:400;color:#1c2a33;transform:scaleX(0.9300)">30</div>
<div class="t" style="left:394.47px;top:1457.93px;font-size:19.77px;font-weight:400;color:#1c2a33;transform:scaleX(0.9300)">40</div>
<div class="t" style="left:394.47px;top:1404.60px;font-size:19.77px;font-weight:400;color:#1c2a33;transform:scaleX(0.9300)">50</div>
<div class="t" style="left:394.47px;top:1351.26px;font-size:19.77px;font-weight:400;color:#1c2a33;transform:scaleX(0.9300)">60</div>
<div class="t" style="left:394.47px;top:1297.93px;font-size:19.77px;font-weight:400;color:#1c2a33;transform:scaleX(0.9300)">70</div>
<div class="t" style="left:394.47px;top:1244.60px;font-size:19.77px;font-weight:400;color:#1c2a33;transform:scaleX(0.9300)">80</div>
<div class="t" style="left:394.47px;top:1191.26px;font-size:19.77px;font-weight:400;color:#1c2a33;transform:scaleX(0.9300)">90</div>
<div class="t" style="left:432.80px;top:1303.77px;font-size:20.35px;font-weight:400;color:#7a7f84;transform:scaleX(1.0080)">Average</div>
<div class="t" style="left:494.17px;top:1690.49px;font-size:21.15px;font-weight:400;color:#1c2a33;transform:scaleX(0.9300)">Apr 28</div>
<div class="t" style="left:679.74px;top:1690.49px;font-size:21.15px;font-weight:400;color:#1c2a33;transform:scaleX(0.9300)">Apr 29</div>
<div class="t" style="left:864.37px;top:1690.49px;font-size:21.15px;font-weight:400;color:#1c2a33;transform:scaleX(0.9300)">Apr 30</div>
<div class="t" style="left:1050.87px;top:1690.49px;font-size:21.15px;font-weight:400;color:#1c2a33;transform:scaleX(0.9300)">May 1</div>
<div class="t" style="left:1235.97px;top:1690.49px;font-size:21.15px;font-weight:400;color:#1c2a33;transform:scaleX(0.9300)">May 2</div>
<div class="t" style="left:1421.07px;top:1690.49px;font-size:21.15px;font-weight:400;color:#1c2a33;transform:scaleX(0.9300)">May 3</div>
<div class="t" style="left:1606.16px;top:1690.49px;font-size:21.15px;font-weight:400;color:#1c2a33;transform:scaleX(0.9300)">May 4</div>
<div class="t" style="left:1791.27px;top:1690.49px;font-size:21.15px;font-weight:400;color:#1c2a33;transform:scaleX(0.9300)">May 5</div>
<div class="t" style="left:434.01px;top:1748.16px;font-size:23.91px;font-weight:400;color:#1c2a33;transform:scaleX(0.9936)">Number of deployments</div>
<div class="t" style="left:1997.11px;top:1108.00px;font-size:27.4px;font-weight:400;color:#1c2a33;transform:scaleX(0.9453)">By Service</div>
<div class="t" style="left:2183.45px;top:1108.00px;font-size:27.4px;font-weight:400;color:#6b7378;transform:scaleX(0.9259)">By Env</div>
<div class="t" style="left:2326.82px;top:1108.00px;font-size:27.4px;font-weight:400;color:#6b7378;transform:scaleX(0.9902)">By Team</div>
<div class="t" style="left:1979.82px;top:1201.32px;font-size:24.42px;font-weight:700;color:#1c2a33;transform:scaleX(0.8838)">SERVICE</div>
<div class="t" style="left:3332.05px;top:1202.47px;font-size:23.18px;font-weight:700;color:#1c2a33;transform:scaleX(0.9456)">FREQ.</div>
<div class="t" style="left:3452.52px;top:1202.47px;font-size:23.18px;font-weight:700;color:#1c2a33;transform:scaleX(0.9778)">CHANGE</div>
<div class="t" style="left:2031.71px;top:1264.75px;font-size:27.11px;font-weight:400;color:#1c2a33;transform:scaleX(0.9881)">stock-search</div>
<div class="t" style="left:3321.07px;top:1264.67px;font-size:26.02px;font-weight:400;color:#1c2a33;transform:scaleX(1.0638)">14.1/d</div>
<div class="t" style="left:3451.39px;top:1265.21px;font-size:24.56px;font-weight:700;color:#c02838;transform:scaleX(1.0056)">1.0%</div>
<div class="t" style="left:2031.70px;top:1336.20px;font-size:27.11px;font-weight:400;color:#1c2a33;transform:scaleX(1.0005)">deliveries-proxy</div>
<div class="t" style="left:3321.07px;top:1336.12px;font-size:26.02px;font-weight:400;color:#1c2a33;transform:scaleX(1.0638)">10.6/d</div>
<div class="t" style="left:3451.39px;top:1336.66px;font-size:24.56px;font-weight:700;color:#268a3e;transform:scaleX(1.0056)">5.7%</div>
<div class="t" style="left:2031.67px;top:1407.65px;font-size:27.11px;font-weight:400;color:#1c2a33;transform:scaleX(1.0272)">cart-tracking</div>
<div class="t" style="left:3321.07px;top:1407.57px;font-size:26.02px;font-weight:400;color:#1c2a33;transform:scaleX(1.0638)">9.29/d</div>
<div class="t" style="left:3437.32px;top:1408.11px;font-size:24.56px;font-weight:700;color:#268a3e;transform:scaleX(1.0056)">20.4%</div>
<div class="t" style="left:2030.67px;top:1479.10px;font-size:27.11px;font-weight:400;color:#1c2a33;transform:scaleX(1.0139)">promocode-checker</div>
<div class="t" style="left:3321.07px;top:1479.02px;font-size:26.02px;font-weight:400;color:#1c2a33;transform:scaleX(1.0638)">8.71/d</div>
<div class="t" style="left:3437.32px;top:1479.56px;font-size:24.56px;font-weight:700;color:#c02838;transform:scaleX(1.0056)">17.6%</div>
<div class="t" style="left:2030.68px;top:1550.55px;font-size:27.11px;font-weight:400;color:#1c2a33;transform:scaleX(1.0119)">payments-backend</div>
<div class="t" style="left:3321.07px;top:1550.47px;font-size:26.02px;font-weight:400;color:#1c2a33;transform:scaleX(1.0638)">6.43/d</div>
<div class="t" style="left:3471.51px;top:1551.01px;font-size:24.56px;font-weight:700;color:#5c6670;transform:scaleX(1.0056)">0%</div>
<div class="t" style="left:2031.69px;top:1622.00px;font-size:27.11px;font-weight:400;color:#1c2a33;transform:scaleX(1.0059)">shopist</div>
<div class="t" style="left:3321.07px;top:1621.92px;font-size:26.02px;font-weight:400;color:#1c2a33;transform:scaleX(1.0638)">5.57/d</div>
<div class="t" style="left:3451.39px;top:1622.46px;font-size:24.56px;font-weight:700;color:#268a3e;transform:scaleX(1.0056)">2.6%</div>
<div class="t" style="left:2030.64px;top:1693.45px;font-size:27.11px;font-weight:400;color:#1c2a33;transform:scaleX(1.0297)">marketing-campaigns</div>
<div class="t" style="left:3321.07px;top:1693.37px;font-size:26.02px;font-weight:400;color:#1c2a33;transform:scaleX(1.0638)">4.71/d</div>
<div class="t" style="left:3437.32px;top:1693.91px;font-size:24.56px;font-weight:700;color:#268a3e;transform:scaleX(1.0056)">13.8%</div>
<div class="t" style="left:2031.68px;top:1764.90px;font-size:27.11px;font-weight:400;color:#1c2a33;transform:scaleX(1.0151)">competitor-analysis</div>
<div class="t" style="left:3321.07px;top:1764.82px;font-size:26.02px;font-weight:400;color:#1c2a33;transform:scaleX(1.0638)">2.86/d</div>
<div class="t" style="left:3437.32px;top:1765.36px;font-size:24.56px;font-weight:700;color:#268a3e;transform:scaleX(1.0056)">33.3%</div>
<div class="t" style="left:2031.67px;top:1836.35px;font-size:27.11px;font-weight:400;color:#1c2a33;transform:scaleX(1.0282)">customer-tracking</div>
<div class="t" style="left:3321.07px;top:1836.27px;font-size:26.02px;font-weight:400;color:#1c2a33;transform:scaleX(1.0638)">2.14/d</div>
<div class="t" style="left:3437.32px;top:1836.81px;font-size:24.56px;font-weight:700;color:#c02838;transform:scaleX(1.0056)">16.7%</div>
<div style="position:absolute;left:1967.0px;top:1848.0px;width:1598.0px;height:13.5px;background:linear-gradient(180deg,rgba(255,255,255,0) 0%,rgba(228,231,235,0.7) 100%);border-radius:0 0 6px 6px"></div>
<div style="position:absolute;left:1960.0px;top:1863.0px;width:1612.0px;height:31.0px;background:#fff"></div>
<div style="position:absolute;left:1965.5px;top:1070.3px;width:1601.5px;height:792.7px;border:2px solid #e3e5e8;border-radius:7px;box-sizing:border-box"></div>
</body></html>
